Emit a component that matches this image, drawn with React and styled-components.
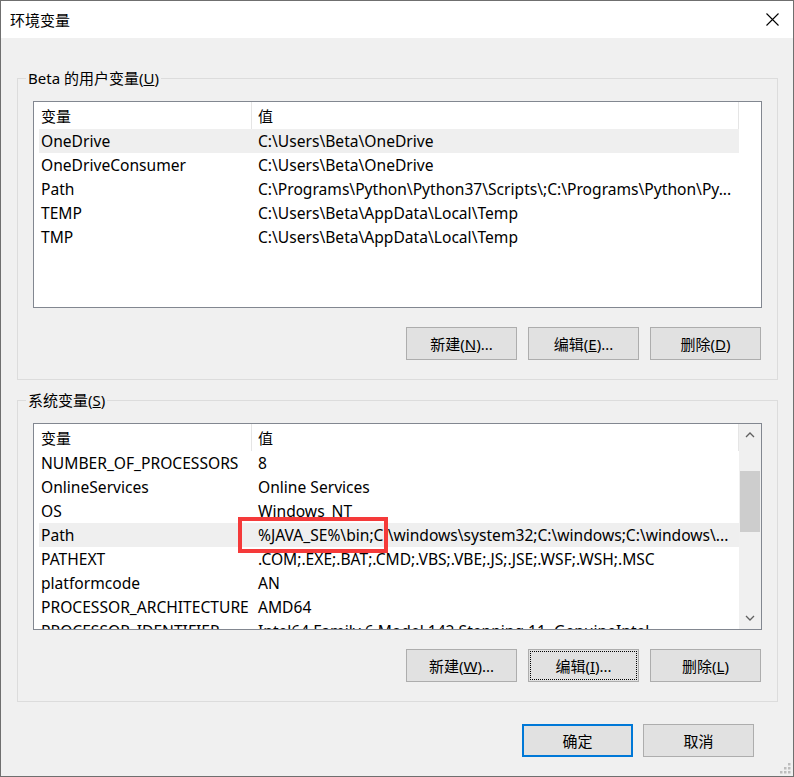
import React from 'react';
import styled, { createGlobalStyle } from 'styled-components';

const GlobalStyle = createGlobalStyle`
  html, body {
    margin: 0;
    padding: 0;
    background: #ffffff;
  }
  body {
    font-family: "Noto Sans", "Noto Sans CJK SC", sans-serif;
  }
`;

const Window = styled.div`
  position: relative;
  width: 794px;
  height: 777px;
  box-sizing: border-box;
  border: 1px solid #6f6f6f;
  background: #f0f0f0;
  display: flex;
  flex-direction: column;
  font-size: 15px;
  color: #000;
`;

const TitleBar = styled.div`
  height: 37px;
  background: #fff;
  display: flex;
  align-items: center;
  justify-content: space-between;
  padding-left: 9px;
`;

const Title = styled.div`
  font-family: "Noto Sans CJK SC", sans-serif;
  font-size: 15px;
  line-height: 20px;
`;

const CloseBtn = styled.div`
  width: 42px;
  height: 37px;
  display: flex;
  align-items: center;
  justify-content: center;
`;

const Body = styled.div`
  flex: 1;
  display: flex;
  flex-direction: column;
  padding: 30px 15px 0 16px;
`;

const Group = styled.fieldset`
  margin: ${(p) => (p.$first ? '0' : '10px 0 0 0')};
  padding: 13px 15px 19px 15px;
  border: 1px solid #dcdcdc;
  min-width: 0;
`;

const Legend = styled.legend`
  padding: 0 2px;
  margin-left: -7px;
  line-height: 20px;
  font-size: 15px;
`;

const List = styled.div`
  height: 207px;
  box-sizing: border-box;
  border: 1px solid #828790;
  background: #fff;
  display: flex;
  overflow: hidden;
`;

const ListContent = styled.div`
  width: 705px;
  overflow: hidden;
`;

const HeaderRow = styled.div`
  display: flex;
  height: 27px;
  margin-left: 5px;
`;

const HeadCell = styled.div`
  width: ${(p) => p.$w}px;
  box-sizing: border-box;
  border-right: 1px solid #e5e5e5;
  padding-left: ${(p) => p.$pad}px;
  padding-bottom: 1px;
  display: flex;
  align-items: center;
  font-family: "Noto Sans CJK SC", sans-serif;
`;

const Row = styled.div`
  position: relative;
  display: flex;
  height: 24px;
  margin-left: 5px;
  width: 700px;
  background: ${(p) => (p.$hot ? '#efefef' : 'transparent')};
`;

const Cell = styled.div`
  width: ${(p) => p.$w}px;
  box-sizing: border-box;
  padding-left: ${(p) => p.$pad}px;
  padding-bottom: 1px;
  display: flex;
  align-items: center;
  white-space: nowrap;
  overflow: hidden;
  font-size: 15.6px;
`;

const RedMark = styled.div`
  position: absolute;
  left: 199px;
  top: -6px;
  width: 150px;
  height: 36px;
  box-sizing: border-box;
  border: 4px solid #f53a3a;
`;

const ScrollBar = styled.div`
  width: 22px;
  background: #f0f0f0;
  display: flex;
  flex-direction: column;
  align-items: center;
`;

const Arrow = styled.div`
  height: 22px;
  width: 100%;
  display: flex;
  align-items: center;
  justify-content: center;
`;

const Track = styled.div`
  flex: 1;
  width: 100%;
  display: flex;
  flex-direction: column;
  padding: 25px 1px 0;
  box-sizing: border-box;
`;

const Thumb = styled.div`
  height: 61px;
  background: #cdcdcd;
`;

const ButtonRow = styled.div`
  display: flex;
  justify-content: flex-end;
  gap: 11px;
  margin-top: 19px;
  padding-right: 1px;
`;

const Button = styled.div`
  width: 111px;
  height: 33px;
  box-sizing: border-box;
  border: ${(p) => (p.$default ? '2px solid #0078d7' : '1px solid #adadad')};
  background: #e1e1e1;
  display: flex;
  align-items: center;
  justify-content: center;
  font-size: 15px;
  outline: ${(p) => (p.$focus ? '1px dotted #000' : 'none')};
  outline-offset: -3px;
  font-family: "Noto Sans", "Noto Sans CJK SC", sans-serif;
`;

const Footer = styled.div`
  display: flex;
  justify-content: flex-end;
  gap: 10px;
  margin-top: 22px;
  padding-right: 24px;
`;

const Grip = styled.svg`
  position: absolute;
  right: 2px;
  bottom: 2px;
`;

const userVars = [
  ['OneDrive', 'C:\\Users\\Beta\\OneDrive', true],
  ['OneDriveConsumer', 'C:\\Users\\Beta\\OneDrive'],
  ['Path', 'C:\\Programs\\Python\\Python37\\Scripts\\;C:\\Programs\\Python\\Py...'],
  ['TEMP', 'C:\\Users\\Beta\\AppData\\Local\\Temp'],
  ['TMP', 'C:\\Users\\Beta\\AppData\\Local\\Temp'],
];

const sysVars = [
  ['NUMBER_OF_PROCESSORS', '8'],
  ['OnlineServices', 'Online Services'],
  ['OS', 'Windows_NT'],
  ['Path', '%JAVA_SE%\\bin;C:\\windows\\system32;C:\\windows;C:\\windows\\...', true, true],
  ['PATHEXT', '.COM;.EXE;.BAT;.CMD;.VBS;.VBE;.JS;.JSE;.WSF;.WSH;.MSC'],
  ['platformcode', 'AN'],
  ['PROCESSOR_ARCHITECTURE', 'AMD64'],
  ['PROCESSOR_IDENTIFIER', 'Intel64 Family 6 Model 142 Stepping 11, GenuineIntel'],
];

function Chevron({ up }) {
  return (
    <svg width='10' height='6' viewBox='0 0 10 6'>
      <polyline
        points={up ? '1,5 5,1 9,5' : '1,1 5,5 9,1'}
        fill='none'
        stroke='#606060'
        strokeWidth='1.3'
      />
    </svg>
  );
}

function VarList({ rows, scroll }) {
  return (
    <List>
      <ListContent>
        <HeaderRow>
          <HeadCell $w={213} $pad={2}>变量</HeadCell>
          <HeadCell $w={487} $pad={6}>值</HeadCell>
        </HeaderRow>
        {rows.map(([name, value, hot, mark]) => (
          <Row key={name + value} $hot={hot}>
            <Cell $w={213} $pad={2}>{name}</Cell>
            <Cell $w={487} $pad={6}>{value}</Cell>
            {mark ? <RedMark /> : null}
          </Row>
        ))}
      </ListContent>
      {scroll ? (
        <ScrollBar>
          <Arrow>
            <Chevron up />
          </Arrow>
          <Track>
            <Thumb />
          </Track>
          <Arrow>
            <Chevron />
          </Arrow>
        </ScrollBar>
      ) : null}
    </List>
  );
}

export default function App() {
  return (
    <>
      <GlobalStyle />
      <Window>
        <TitleBar>
          <Title>环境变量</Title>
          <CloseBtn>
            <svg width='13' height='13' viewBox='0 0 13 13'>
              <path d='M0.5 0.5 L12.5 12.5 M12.5 0.5 L0.5 12.5' stroke='#000' strokeWidth='1.1' />
            </svg>
          </CloseBtn>
        </TitleBar>
        <Body>
          <Group $first>
            <Legend>
              Beta 的用户变量(<u>U</u>)
            </Legend>
            <VarList rows={userVars} />
            <ButtonRow>
              <Button>新建(<u>N</u>)...</Button>
              <Button>编辑(<u>E</u>)...</Button>
              <Button>删除(<u>D</u>)</Button>
            </ButtonRow>
          </Group>
          <Group>
            <Legend>
              系统变量(<u>S</u>)
            </Legend>
            <VarList rows={sysVars} scroll />
            <ButtonRow>
              <Button>新建(<u>W</u>)...</Button>
              <Button $focus>编辑(<u>I</u>)...</Button>
              <Button>删除(<u>L</u>)</Button>
            </ButtonRow>
          </Group>
          <Footer>
            <Button $default>确定</Button>
            <Button>取消</Button>
          </Footer>
        </Body>
        <Grip width='12' height='12' viewBox='0 0 12 12'>
          <rect x='9' y='1' width='2.5' height='2.5' fill='#bdbdbd' />
          <rect x='5' y='5' width='2.5' height='2.5' fill='#bdbdbd' />
          <rect x='9' y='5' width='2.5' height='2.5' fill='#bdbdbd' />
          <rect x='1' y='9' width='2.5' height='2.5' fill='#bdbdbd' />
          <rect x='5' y='9' width='2.5' height='2.5' fill='#bdbdbd' />
          <rect x='9' y='9' width='2.5' height='2.5' fill='#bdbdbd' />
        </Grip>
      </Window>
    </>
  );
}
